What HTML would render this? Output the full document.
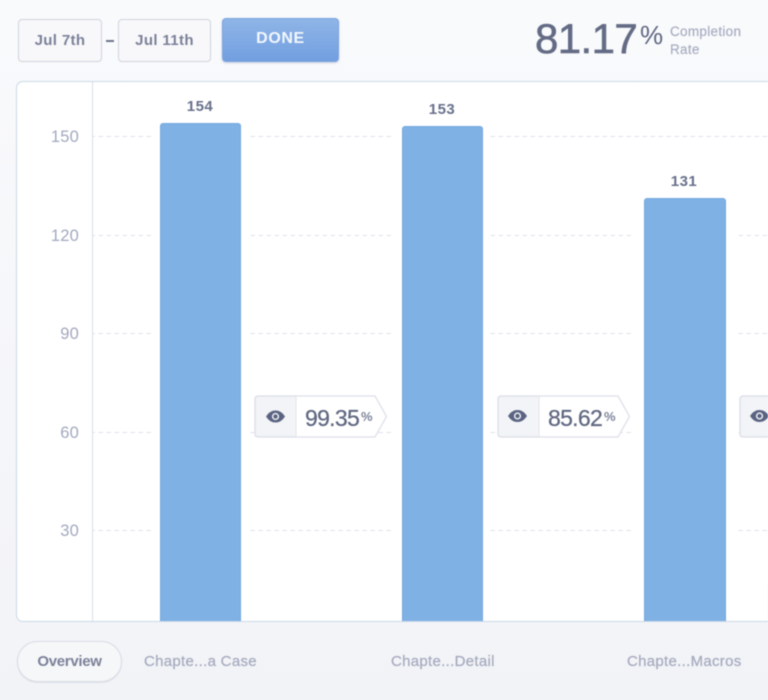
<!DOCTYPE html>
<html><head><meta charset="utf-8"><style>
*{box-sizing:border-box}
html,body{margin:0;padding:0}
body{width:768px;height:700px;overflow:hidden;position:relative;background:linear-gradient(#f9fafc,#f2f3f7);font-family:"Liberation Sans",sans-serif;}
#w{position:absolute;left:0;top:0;width:768px;height:700px;overflow:hidden;filter:blur(.45px)}
.a{position:absolute;white-space:nowrap}
.date{top:19px;height:43px;border:1.5px solid #d0d3dd;border-radius:4px;background:#f8f8fa;color:#7b8199;font-weight:bold;font-size:15px;letter-spacing:.35px;line-height:41px;text-align:center}
.done{left:222px;top:18px;width:117px;height:44px;border-radius:4px;background:linear-gradient(#8fb5e7,#729fe0);border:1px solid #7ba4de;box-shadow:0 1px 2px rgba(90,110,160,.3);color:#f3f7fd;font-weight:bold;font-size:16px;letter-spacing:.6px;line-height:40px;text-align:center}
.chart{left:16px;top:81px;width:780px;height:541px;background:#fff;border:1.5px solid #cbd9e6;border-radius:7px}
.axis{left:92px;top:82px;width:1px;height:539px;background:#d9e0ea}
.grid{left:93px;width:675px;height:1px;background:repeating-linear-gradient(90deg,#dde2ec 0 4.500px,transparent 4.500px 8px);background-position:-2.500px 0;background-size:8px 1px;background-repeat:repeat-x}
.y{left:39px;width:40px;text-align:right;color:#a2a9be;font-size:16.500px;letter-spacing:.2px;line-height:20px}
.bar{width:82px;background:#7fb1e4;border:1px solid #74a8df;border-bottom:0;border-radius:3px 3px 0 0}
.cut{height:8px;background:#fff}
.c1{left:152px;width:96px}.c2{left:394px;width:96px}.c3{left:634px;width:102px}
.val{width:82px;text-align:center;color:#68708b;font-weight:bold;font-size:15px;letter-spacing:.5px;line-height:18px}
.tag{top:395px;width:134px;height:43px}
.tag svg.s{position:absolute;left:0;top:0}
.tag .num{position:absolute;left:51px;top:10px;font-size:23px;line-height:26px;color:#5f6781;-webkit-text-stroke:.25px #5f6781;letter-spacing:-.7px}
.tag .pc{position:absolute;left:107px;top:14px;font-size:13px;line-height:16px;color:#7d849c;font-weight:bold}
.x{top:653px;color:#a4a9bd;-webkit-text-stroke:.2px #a4a9bd;font-size:15px;letter-spacing:.3px;line-height:18px}
.ov{left:17px;top:641px;width:105px;height:41px;border:1.5px solid #d8dbe4;border-radius:21px;background:#f6f7f9;box-shadow:0 1px 1px rgba(120,130,160,.15);color:#7b8199;font-weight:bold;font-size:15px;letter-spacing:-.3px;line-height:39px;text-align:center}
</style></head><body><div id="w">
<div class="a date" style="left:18px;width:84px">Jul 7th</div>
<div class="a" style="left:106px;top:40px;width:8px;height:2px;background:#6d748c"></div>
<div class="a date" style="left:118px;width:93px">Jul 11th</div>
<div class="a done">DONE</div>
<div class="a" style="left:535px;top:15px;font-size:42px;letter-spacing:-.6px;line-height:48px;color:#636b85;-webkit-text-stroke:.6px #636b85">81.17</div>
<div class="a" style="left:640px;top:20px;font-size:26px;line-height:30px;color:#5f6781;">%</div>
<div class="a" style="left:670px;top:23px;font-size:13.500px;letter-spacing:.3px;line-height:17.500px;color:#a6abbf;-webkit-text-stroke:.15px #a6abbf">Completion<br>Rate</div>

<div class="a chart"></div>
<div class="a axis"></div>
<div class="a grid" style="top:136px"></div>
<div class="a grid" style="top:235px"></div>
<div class="a grid" style="top:333px"></div>
<div class="a grid" style="top:432px"></div>
<div class="a grid" style="top:530px"></div>
<div class="a y" style="top:127px">150</div>
<div class="a y" style="top:226px">120</div>
<div class="a y" style="top:324px">90</div>
<div class="a y" style="top:423px">60</div>
<div class="a y" style="top:521px">30</div>

<div class="a cut c1" style="top:132px"></div>
<div class="a cut c2" style="top:132px"></div>
<div class="a cut c1" style="top:231px"></div>
<div class="a cut c2" style="top:231px"></div>
<div class="a cut c3" style="top:231px"></div>
<div class="a cut c1" style="top:329px"></div>
<div class="a cut c2" style="top:329px"></div>
<div class="a cut c3" style="top:329px"></div>
<div class="a cut c1" style="top:428px"></div>
<div class="a cut c2" style="top:428px"></div>
<div class="a cut c3" style="top:428px"></div>
<div class="a cut c1" style="top:526px"></div>
<div class="a cut c2" style="top:526px"></div>
<div class="a cut c3" style="top:526px"></div>

<div class="a val" style="left:159px;top:98px">154</div>
<div class="a bar" style="left:160px;top:123px;height:498px;width:81px"></div>
<div class="a val" style="left:401px;top:101px">153</div>
<div class="a bar" style="left:402px;top:126px;height:495px;width:81px"></div>
<div class="a val" style="left:643px;top:173px">131</div>
<div class="a bar" style="left:644px;top:198px;height:423px"></div>

<div class="a tag" style="left:254px">
<svg class="s" width="134" height="43" viewBox="0 0 134 43"><path d="M4 1H121L132.500 21.500L121 42H4Q1 42 1 39V4Q1 1 4 1Z" fill="#fff" stroke="#e2e4ec" stroke-width="1.500"/><path d="M4 1.500H42V41.500H4Q1.500 41.500 1.500 39V4Q1.500 1.500 4 1.500Z" fill="#f3f4f7" stroke="#e2e4ec"/><path d="M12 21.500C15 17 18 15.500 21.500 15.500S28 17 31 21.500C28 26 25 27.500 21.500 27.500S15 26 12 21.500Z" fill="#5a6482"/><circle cx="21.500" cy="21.500" r="3.600" fill="#f3f4f7"/><circle cx="21.500" cy="21.500" r="2.200" fill="#5a6482"/></svg>
<div class="num">99.35</div><div class="pc">%</div></div>
<div class="a tag" style="left:497px">
<svg class="s" width="134" height="43" viewBox="0 0 134 43"><path d="M4 1H121L132.500 21.500L121 42H4Q1 42 1 39V4Q1 1 4 1Z" fill="#fff" stroke="#e2e4ec" stroke-width="1.500"/><path d="M4 1.500H42V41.500H4Q1.500 41.500 1.500 39V4Q1.500 1.500 4 1.500Z" fill="#f3f4f7" stroke="#e2e4ec"/><path d="M11 21C14 16.500 17 15 20.500 15S27 16.500 30 21C27 25.500 24 27 20.500 27S14 25.500 11 21Z" fill="#5a6482"/><circle cx="20.500" cy="21" r="3.600" fill="#f3f4f7"/><circle cx="20.500" cy="21" r="2.200" fill="#5a6482"/></svg>
<div class="num">85.62</div><div class="pc">%</div></div>
<div class="a tag" style="left:739px">
<svg class="s" width="134" height="43" viewBox="0 0 134 43"><path d="M4 1H121L132.500 21.500L121 42H4Q1 42 1 39V4Q1 1 4 1Z" fill="#fff" stroke="#e2e4ec" stroke-width="1.500"/><path d="M4 1.500H42V41.500H4Q1.500 41.500 1.500 39V4Q1.500 1.500 4 1.500Z" fill="#f3f4f7" stroke="#e2e4ec"/><path d="M11 21C14 16.500 17 15 20.500 15S27 16.500 30 21C27 25.500 24 27 20.500 27S14 25.500 11 21Z" fill="#5a6482"/><circle cx="20.500" cy="21" r="3.600" fill="#f3f4f7"/><circle cx="20.500" cy="21" r="2.200" fill="#5a6482"/></svg></div>

<div class="a ov">Overview</div>
<div class="a x" style="left:144px">Chapte...a Case</div>
<div class="a x" style="left:391px">Chapte...Detail</div>
<div class="a x" style="left:627px">Chapte...Macros</div>
</div></body></html>
